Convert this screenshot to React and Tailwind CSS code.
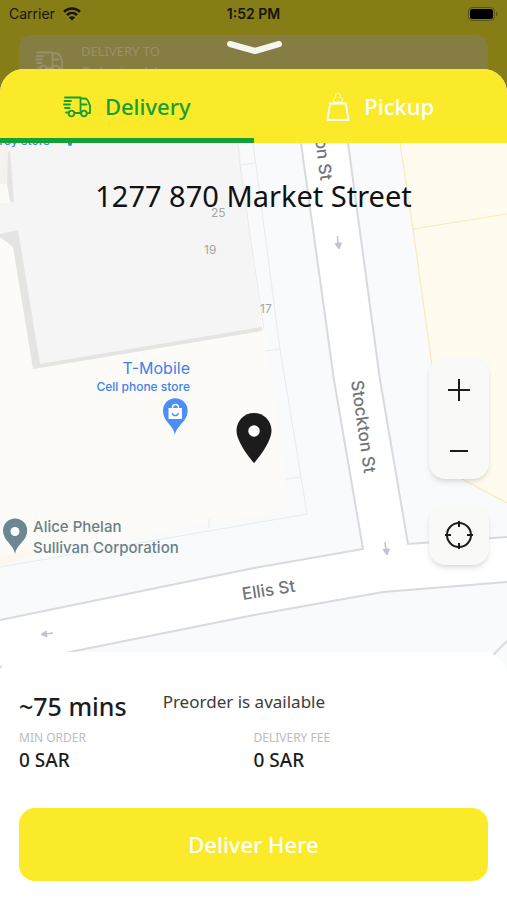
import React, { useState } from 'react';

function TruckIcon({ className }) {
  return (
    <svg className={className} viewBox="0 0 28 22" fill="none" stroke="currentColor" strokeWidth="1.8" strokeLinecap="round" strokeLinejoin="round">
      <path d="M2 1.5h15.500v16M17.500 2.500h4.500c1.500 0 2.200.8 2.900 2.200l2.100 5v7.500h-3" />
      <path d="M18 8.500h5.500" />
      <path d="M1.500 5h6.500M1 8.500h6M2 12h4.500M3 16.500h2.500M11.500 17h6.500" />
      <circle cx="8.500" cy="17.500" r="2.800" />
      <circle cx="21" cy="17.500" r="2.800" />
    </svg>
  );
}

function BagIcon({ className }) {
  return (
    <svg className={className} viewBox="0 0 24 30" fill="none" stroke="currentColor" strokeLinejoin="round">
      <path strokeWidth="1.8" d="M4.200 11.500h15.600l2.700 16.500h-21z" />
      <path strokeWidth="0.8" d="M8 10c-1.500-3.500 0-5 2-4.500-2.500-6 6.500-6 4 0 2-.5 3.500 1 2 4.500" />
      <path strokeWidth="1.500" d="M8 10.500h8" />
    </svg>
  );
}

function MapView() {
  return (
    <svg className="absolute inset-0 h-full w-full" viewBox="0 143 507 533" preserveAspectRatio="xMidYMin slice" aria-label="Map" role="img">
      <rect y="143" width="507" height="533" fill="#f8fafb" />

      {/* blocks */}
      <path d="M0 143H240L289 510L0 559Z" fill="#fcfbf7" />
      <path d="M0 143H8L14 202L0 206Z" fill="#f3f2ef" />
      <path d="M0 184H8L14 202L0 204Z" fill="#fcfbf7" />
      <path d="M8 143L14 202L0 205V235L18 230L38 365L262 329L239 143Z" fill="#f5f5f5" />
      <path d="M8 152L7 184L10 202H14L10 150ZM0 234L18 230L40 364L262 327V331L33 369L13 247L0 237Z" fill="#e4e4e2" />
      <path d="M253 143L280 349L307 514L0 567M239 165L256 163M238 143L240 165L264 330M265 351L280 349M285 479L301 477M209 519V528" fill="none" stroke="#e8eaec" strokeWidth="1" />
      <path d="M0 556L60 546L0 567Z" fill="#fdf8ee" />
      <path d="M400 143L413 229L432 365L445 470L464 480L507 503V143Z" fill="#fffbef" />
      <path d="M400 143L413 229L432 365L445 470L464 480L507 503M413 229L507 214" fill="none" stroke="#fde8b6" strokeWidth="1.2" />

      {/* streets */}
      <path d="M301 143L334 380L363 549L254 568L0 620V667L70 652L254 615L383 592L507 582V537L408 544L380 380L348 143Z" fill="#fff" />
      <path d="M301 143L334 380L363 549L254 568L0 620M348 143L380 380L408 544L507 537M0 667L70 652L254 615L383 592L507 582M493 655L507 641" fill="none" stroke="#d8dade" strokeWidth="2" />
      <g fill="#c0c1d6" stroke="#c0c1d6">
        <path d="M337.500 236L338 244" strokeWidth="1.500" />
        <path d="M335 243.500L341.500 243L339 249Z" />
        <path d="M385 542L386 550" strokeWidth="1.500" />
        <path d="M383 549.500L389.500 549L387 555Z" />
        <path d="M53 633L46 634" strokeWidth="1.500" />
        <path d="M46 631L47 637L41 634.500Z" />
      </g>

      {/* street names */}
      <g fill="#70757a" fontFamily="Inter, sans-serif" fontSize="17" fontWeight="500">
        <text transform="translate(351 381) rotate(82)">Stockton St</text>
        <text transform="translate(309 88) rotate(83)">Stockton St</text>
        <text transform="translate(243 600) rotate(-9)">Ellis St</text>
      </g>
      <g fill="#a5a5a5" fontFamily="Inter, sans-serif" fontSize="12">
        <text x="211" y="217">25</text>
        <text x="204" y="254">19</text>
        <text x="260" y="313">17</text>
      </g>

      {/* places */}
      <g fill="#3f82e8" fontFamily="Inter, sans-serif">
        <text x="-3" y="145" fontSize="12" fontWeight="500">Toy store</text>
        <circle cx="70" cy="144" r="2" />
        <text x="190" y="374" fontSize="16" textAnchor="end">T-Mobile</text>
        <text x="190" y="391" fontSize="12" fontWeight="500" textAnchor="end">Cell phone store</text>
      </g>
      <path d="M175 435C173.500 425 163 422 163 410.500a12.300 12.300 0 0 1 24.600 0C187.600 422 176.500 425 175 435Z" fill="#4c8df6" />
      <path d="M168.500 408h13.500v11h-13.500z" fill="#fff" />
      <path d="M172.500 408.500v-1a3 3 0 0 1 6 0v1" fill="none" stroke="#fff" strokeWidth="1.400" />
      <path d="M172 413c1 3.500 5.500 3.500 6.500 0" fill="none" stroke="#4c8df6" strokeWidth="1.300" />
      <path d="M15 554C13.500 544 3 541 3 530.500a12.100 12.100 0 0 1 24.200 0C27.200 541 16.500 544 15 554Z" fill="#6b8792" />
      <circle cx="15" cy="531.500" r="4.500" fill="#fff" />
      <g fill="#6b7f88" fontFamily="Inter, sans-serif" fontSize="15" fontWeight="500">
        <text x="33" y="532">Alice Phelan</text>
        <text x="33" y="553">Sullivan Corporation</text>
      </g>
    </svg>
  );
}

function StatusBar() {
  return (
    <div className="grid h-7 grid-cols-3 items-center px-[9px] font-[Inter,sans-serif] text-sm text-[#16140a]">
      <div className="flex items-center gap-2">
        <span>Carrier</span>
        <svg className="h-[14px] w-[18px]" viewBox="0 0 18 14" fill="none" stroke="currentColor" strokeWidth="2.400">
          <path d="M1 4.800c4.500-4.500 11.500-4.500 16 0M4 8c3-2.800 7-2.800 10 0" />
          <path d="M9 13.500L5.900 10.400c1.800-1.600 4.400-1.600 6.200 0z" fill="currentColor" stroke="none" />
        </svg>
      </div>
      <span className="text-center font-semibold">1:52 PM</span>
      <svg className="h-[14px] w-[30px] justify-self-end" viewBox="0 0 30 14">
        <rect x="0.500" y="0.500" width="26" height="13" rx="4" fill="none" stroke="#5b540f" />
        <rect x="2" y="2" width="23" height="10" rx="2.500" fill="#000" />
        <path d="M28 4.500c2 1 2 4 0 5z" fill="#5b540f" />
      </svg>
    </div>
  );
}

const tabs = [
  { id: 'delivery', label: 'Delivery', Icon: TruckIcon, iconClass: 'h-[22px] w-7' },
  { id: 'pickup', label: 'Pickup', Icon: BagIcon, iconClass: 'h-[30px] w-6' },
];

const fees = [
  { label: 'MIN ORDER', value: '0 SAR' },
  { label: 'DELIVERY FEE', value: '0 SAR' },
];

function App() {
  const [activeTab, setActiveTab] = useState('delivery');

  return (
    <div className="flex min-h-screen flex-col bg-[#877d16] font-['Noto_Sans',sans-serif]">
      {/* dimmed page behind the sheet */}
      <header className="relative h-[69px] overflow-hidden">
        <StatusBar />
        <div className="mx-[19px] mt-[7px] flex h-16 items-start gap-[18px] rounded-xl bg-[#857d42] px-4 pt-1 text-[#98916a]">
          <TruckIcon className="mt-3 h-[22px] w-7" />
          <div>
            <p className="text-[13px] leading-6">DELIVERY TO</p>
            <p className="text-base leading-5">Select address</p>
          </div>
        </div>
        <button className="absolute left-1/2 top-10 -translate-x-1/2 cursor-pointer" aria-label="Close">
          <svg className="h-4 w-14" viewBox="0 0 56 16" fill="none" stroke="#f6f5f0" strokeWidth="6" strokeLinecap="round" strokeLinejoin="round">
            <path d="M4 4l25 7 24-7" />
          </svg>
        </button>
      </header>

      <main className="flex flex-1 flex-col overflow-hidden rounded-t-3xl bg-white">
        <div className="grid grid-cols-2 bg-[#fbea29]">
          {tabs.map(({ id, label, Icon, iconClass }) => (
            <button
              key={id}
              onClick={() => setActiveTab(id)}
              className={`flex h-[74px] cursor-pointer items-center justify-center gap-[14px] border-b-[5px] pt-1.5 text-[22px] font-medium ${
                activeTab === id ? 'border-[#149f37] text-[#149f37]' : 'border-transparent text-white'
              }`}
            >
              <Icon className={iconClass} />
              {label}
            </button>
          ))}
        </div>

        <section className="relative flex-1">
          <MapView />
          <h1 className="relative pt-[33px] text-center text-[29px] leading-10 text-[#111111]">1277 870 Market Street</h1>

          <svg className="absolute left-1/2 top-[270px] h-[50px] w-9 -translate-x-1/2" viewBox="5 2 14 20" fill="#1c1c1c">
            <path d="M12 2C8.130 2 5 5.130 5 9c0 5.250 7 13 7 13s7-7.750 7-13c0-3.870-3.130-7-7-7z" />
            <circle cx="12" cy="9.200" r="2.300" fill="#fff" />
          </svg>

          {/* map controls */}
          <div className="absolute bottom-[111px] right-[18px] flex flex-col gap-[26px] text-[#1c1c1c]">
            <div className="flex flex-col rounded-2xl bg-[#f9f9f7] shadow-md">
              <button className="flex h-[61px] w-[60px] cursor-pointer items-center justify-center pt-1" aria-label="Zoom in">
                <svg className="size-6" viewBox="0 0 24 24" stroke="currentColor" strokeWidth="2">
                  <path d="M1 12h22M12 1v22" />
                </svg>
              </button>
              <button className="flex h-[61px] w-[60px] cursor-pointer items-center justify-center pt-1" aria-label="Zoom out">
                <svg className="size-6" viewBox="0 0 24 24" stroke="currentColor" strokeWidth="2">
                  <path d="M3 12h18" />
                </svg>
              </button>
            </div>
            <button className="flex size-[60px] cursor-pointer items-center justify-center rounded-2xl bg-[#f9f9f7] shadow-md" aria-label="My location">
              <svg className="size-[30px]" viewBox="0 0 30 30" fill="none" stroke="currentColor" strokeWidth="2">
                <circle cx="15" cy="15" r="12" />
                <path d="M15 1v6M15 23v6M1 15h6M23 15h6" />
              </svg>
            </button>
          </div>
        </section>

        <section className="relative -mt-6 rounded-t-3xl bg-white px-[19px] pb-[19px] pt-9">
          <div className="flex items-start gap-9">
            <p className="text-[25px] font-medium leading-9 text-[#1c1c1c]">~75 mins</p>
            <p className="text-[17px] leading-7 text-[#3c3c3c]">Preorder is available</p>
          </div>
          <dl className="mt-1 grid grid-cols-2">
            {fees.map((fee) => (
              <div key={fee.label}>
                <dt className="text-xs leading-5 text-[#bdbdbd]">{fee.label}</dt>
                <dd className="text-[19px] font-medium leading-6 text-[#1c1c1c]">{fee.value}</dd>
              </div>
            ))}
          </dl>
          <button className="mt-9 h-[73px] w-full cursor-pointer rounded-2xl bg-[#fbea29] text-[22px] font-medium text-white">
            Deliver Here
          </button>
        </section>
      </main>
    </div>
  );
}

export default App;
